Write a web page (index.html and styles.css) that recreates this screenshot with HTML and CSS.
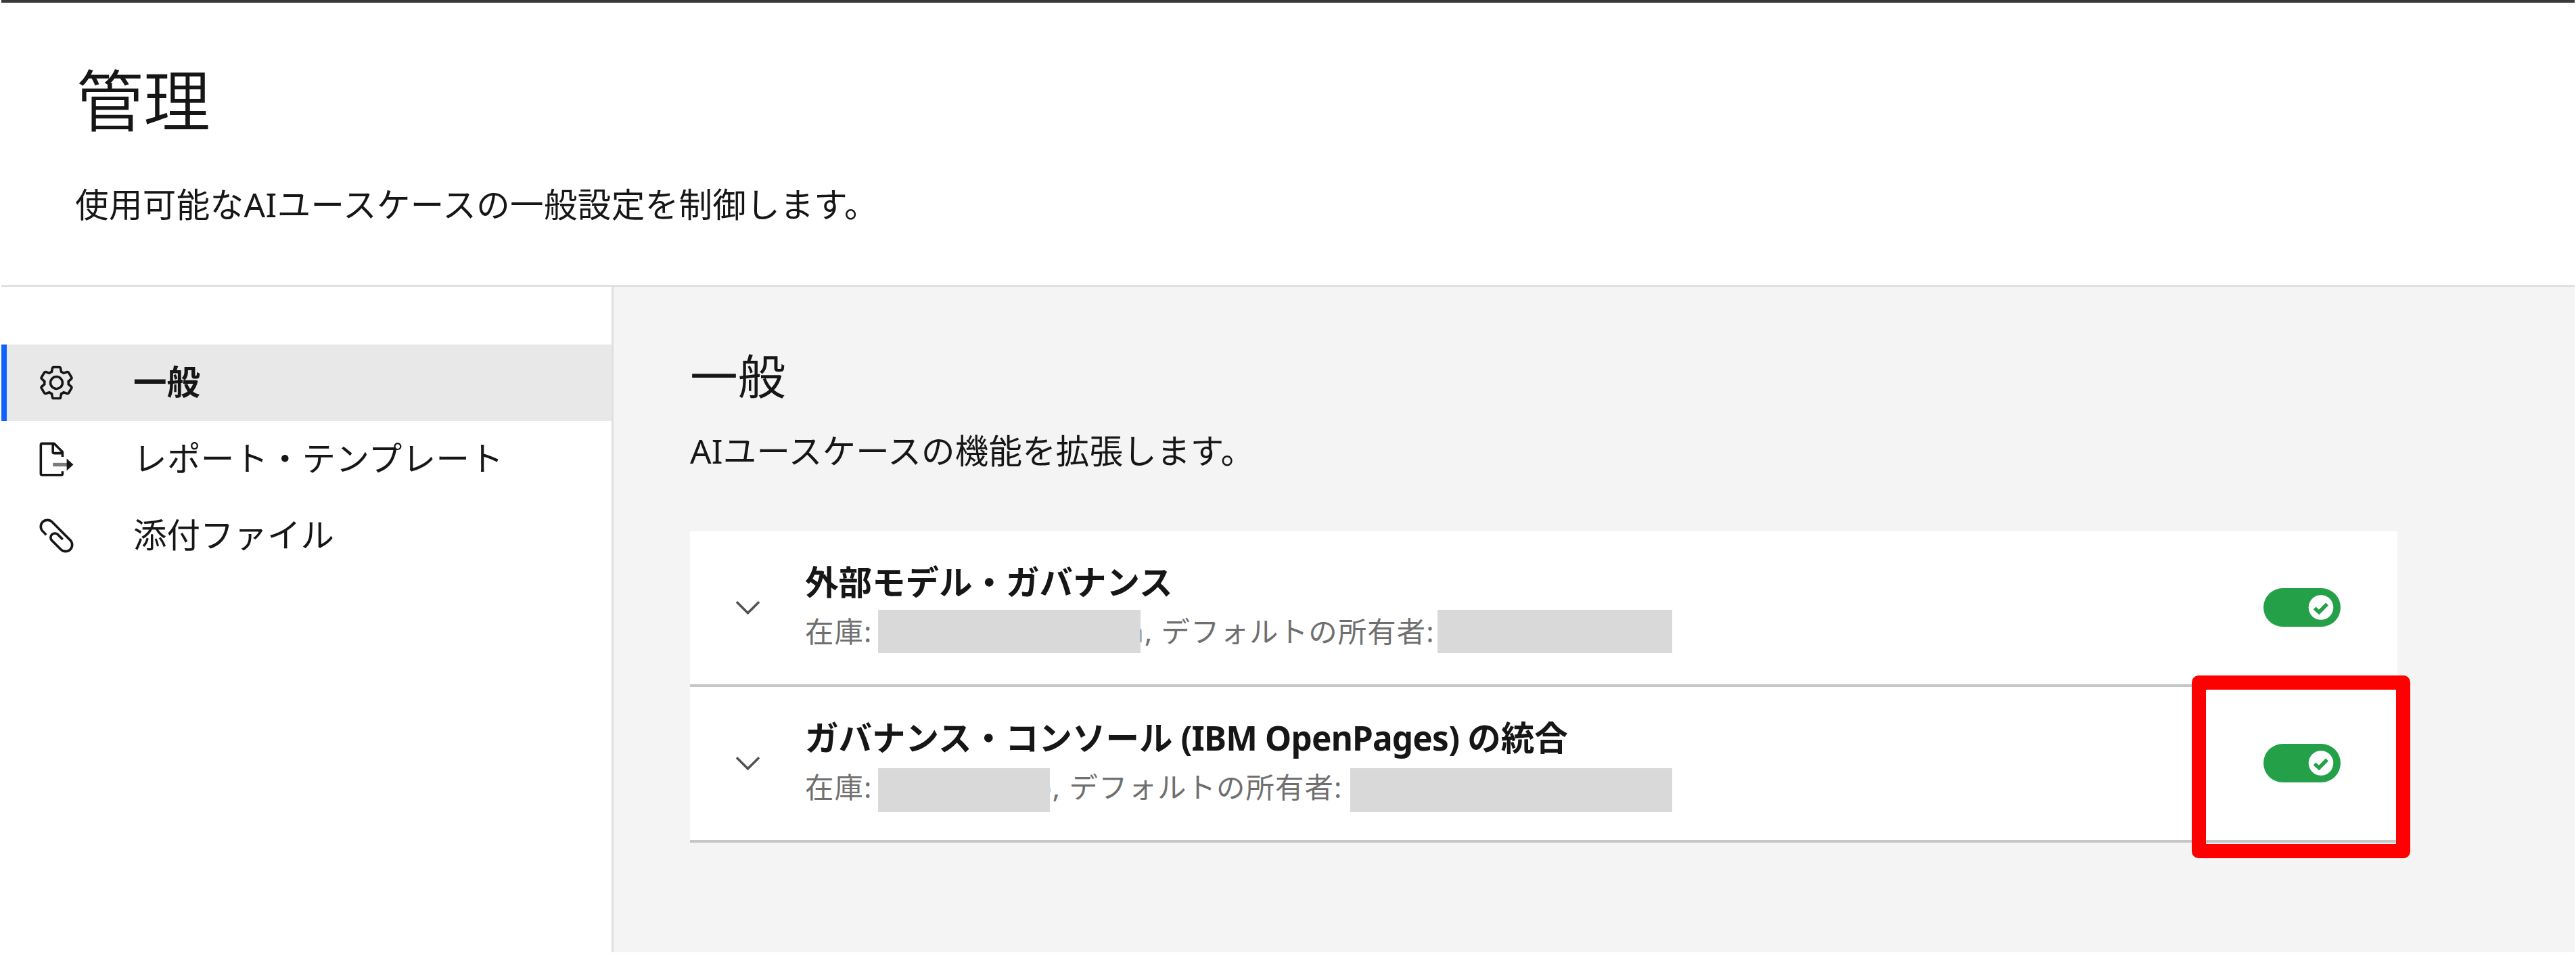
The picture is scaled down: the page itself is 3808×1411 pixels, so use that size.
FILE: index.html
```html
<!DOCTYPE html>
<html lang="ja">
<head>
<meta charset="utf-8">
<title>管理</title>
<link rel="stylesheet" href="styles.css">
</head>
<body>
<div class="page">
  <header class="header">
    <h1 class="header-title">管理</h1>
    <p class="header-desc">使用可能なAIユースケースの一般設定を制御します。</p>
  </header>
  <div class="body">
    <nav class="sidenav">
      <a class="nav-item nav-item-active">
        <svg class="icon" viewBox="0 0 32 32"><path d="M27 16.76c0-.25 0-.5 0-.76s0-.51 0-.77l1.92-1.68A2 2 0 0 0 29.3 11l-2.36-4a2 2 0 0 0-1.73-1 2 2 0 0 0-.64.1l-2.43.82a11.35 11.35 0 0 0-1.31-.75l-.51-2.52a2 2 0 0 0-2-1.61h-4.68a2 2 0 0 0-2 1.61l-.51 2.52a11.48 11.48 0 0 0-1.32.75L7.43 6.06A2 2 0 0 0 6.79 6a2 2 0 0 0-1.73 1L2.7 11a2 2 0 0 0 .41 2.51L5 15.24c0 .25 0 .5 0 .76s0 .51 0 .77l-1.92 1.68A2 2 0 0 0 2.7 21l2.36 4a2 2 0 0 0 1.73 1 2 2 0 0 0 .64-.1l2.43-.82a11.35 11.35 0 0 0 1.31.75l.51 2.52a2 2 0 0 0 2 1.61h4.72a2 2 0 0 0 2-1.61l.51-2.52a11.48 11.48 0 0 0 1.32-.75l2.42.82a2 2 0 0 0 .64.1 2 2 0 0 0 1.73-1l2.28-4a2 2 0 0 0-.41-2.51ZM25.21 24l-3.43-1.16a8.86 8.86 0 0 1-2.71 1.57L18.36 28h-4.72l-.71-3.55a9.36 9.36 0 0 1-2.7-1.57L6.79 24l-2.36-4 2.72-2.4a8.9 8.9 0 0 1 0-3.13L4.43 12l2.36-4 3.43 1.16a8.86 8.86 0 0 1 2.71-1.57L13.64 4h4.72l.71 3.55a9.36 9.36 0 0 1 2.7 1.57L25.21 8l2.36 4-2.72 2.4a8.9 8.9 0 0 1 0 3.13L27.57 20Z"/><path d="M16 22a6 6 0 1 1 6-6 5.94 5.94 0 0 1-6 6Zm0-10a3.91 3.91 0 0 0-4 4 3.91 3.91 0 0 0 4 4 3.91 3.91 0 0 0 4-4 3.91 3.91 0 0 0-4-4Z"/></svg>
        <span class="nav-label">一般</span>
      </a>
      <a class="nav-item">
        <svg class="icon" viewBox="0 0 32 32"><path class="arrow" d="M13 19h12v3H13Z"/><path d="m24.5 15.5 5.5 5-5.5 5Z"/><path d="M22 14v-4a1 1 0 0 0-.29-.71l-7-7A1 1 0 0 0 14 2H4a2 2 0 0 0-2 2v24a2 2 0 0 0 2 2h16a2 2 0 0 0 2-2v-2h-2v2H4V4h8v6a2 2 0 0 0 2 2h6v2Zm-8-4V4.41L19.59 10Z"/></svg>
        <span class="nav-label nav-label-report">レポート・テンプレート</span>
      </a>
      <a class="nav-item">
        <svg class="icon" viewBox="0 0 32 32"><path d="M28.1 18.9 13.1 3.9c-2.5-2.6-6.6-2.6-9.2-.1S1.3 10.5 3.9 13c0 0 .1.1.1.1L6.8 16l1.4-1.4-2.9-2.9C3.6 10 3.6 7.1 5.3 5.4s4.6-1.8 6.3-.1c0 0 0 0 .1.1l14.9 14.9c1.8 1.7 1.8 4.6.1 6.3-1.7 1.8-4.6 1.8-6.3.1 0 0 0 0-.1-.1l-7.4-7.4c-1-1-.9-2.6 0-3.5 1-.9 2.5-.9 3.5 0l4.1 4.1 1.4-1.4c0 0-4.2-4.2-4.2-4.2-1.8-1.7-4.6-1.6-6.3.2-1.6 1.7-1.6 4.4 0 6.2l7.5 7.5c2.5 2.6 6.6 2.6 9.2.1s2.6-6.7 0-9.3Z"/></svg>
        <span class="nav-label">添付ファイル</span>
      </a>
    </nav>
    <main class="main">
      <h2 class="main-title">一般</h2>
      <p class="main-desc">AIユースケースの機能を拡張します。</p>
      <section class="list">
        <div class="row">
          <svg class="chevron" viewBox="0 0 16 16"><path d="M8 11 3 6l.7-.7L8 9.6l4.3-4.3.7.7Z"/></svg>
          <div class="row-text">
            <h3 class="row-title">外部モデル・ガバナンス</h3>
            <div class="row-meta"><span class="stock">在庫:</span><span class="mask mask-a"></span><span class="owner owner-a">a, デフォルトの所有者:</span><span class="mask mask-b"></span></div>
          </div>
          <svg class="toggle" viewBox="0 0 114 57"><rect class="track" width="114" height="57" rx="28.5"/><circle class="thumb" cx="85" cy="28.5" r="18.3"/><path class="check" d="M75.5 29.5 82.2 35.5 94 23.5"/></svg>
        </div>
        <div class="row">
          <svg class="chevron" viewBox="0 0 16 16"><path d="M8 11 3 6l.7-.7L8 9.6l4.3-4.3.7.7Z"/></svg>
          <div class="row-text">
            <h3 class="row-title">ガバナンス・コンソール<span class="latin"> (IBM OpenPages) </span>の統合</h3>
            <div class="row-meta row-meta-low"><span class="stock">在庫:</span><span class="mask mask-c"></span><span class="owner owner-c">o, デフォルトの所有者:</span><span class="mask mask-d"></span></div>
          </div>
          <svg class="toggle" viewBox="0 0 114 57"><rect class="track" width="114" height="57" rx="28.5"/><circle class="thumb" cx="85" cy="28.5" r="18.3"/><path class="check" d="M75.5 29.5 82.2 35.5 94 23.5"/></svg>
          <div class="highlight"></div>
        </div>
      </section>
    </main>
  </div>
</div>
</body>
</html>
```
FILE: styles.css
```css
* { box-sizing: border-box; }
body {
  margin: 0;
  background: #fff;
  color: #161616;
  font-family: "Noto Sans", "Noto Sans CJK JP", sans-serif;
  font-size: 49.5px;
}
h1, h2, h3, p { margin: 0; font-weight: 400; white-space: nowrap; }
.page {
  width: 3808px;
  height: 1411px;
  padding: 0 2px 4px 2px;
  display: flex;
  flex-direction: column;
  overflow: hidden;
}
.header {
  flex: none;
  height: 424px;
  border-top: 4px solid #393939;
  border-bottom: 3px solid #e0e0e0;
  padding: 82px 0 0 109px;
}
.header-title { margin-left: 2px; font-size: 99px; font-weight: 350; line-height: 124px; }
.header-desc { margin-top: 57px; line-height: 70px; letter-spacing: .4px; }
.body { flex: 1; display: flex; min-height: 0; }
.sidenav {
  flex: none;
  width: 905px;
  padding-top: 85px;
  border-right: 3px solid #e0e0e0;
}
.nav-item {
  display: flex;
  align-items: center;
  height: 113px;
  padding-left: 53px;
  gap: 85px;
}
.nav-item-active {
  background: #e8e8e8;
  border-left: 8px solid #0f62fe;
  padding-left: 45px;
  font-weight: 700;
}
.icon { flex: none; width: 57px; height: 57px; fill: #161616; }
.arrow { fill: #7a7a7a; }
.nav-label { line-height: 64px; padding-bottom: 4px; white-space: nowrap; }
.nav-label-report { letter-spacing: .4px; }
.main { flex: 1; background: #f4f4f4; padding: 82px 0 0 113px; }
.main-title { font-size: 70.7px; line-height: 99px; }
.main-desc { margin-top: 29px; line-height: 64px; letter-spacing: .2px; }
.list { width: 2524px; margin-top: 87px; }
.row {
  position: relative;
  display: flex;
  align-items: flex-start;
  height: 230px;
  background: #fff;
  border-bottom: 4px solid #c6c6c6;
}
.chevron { flex: none; width: 57px; height: 57px; margin: 84px 0 0 57px; fill: #525252; }
.row-text { flex: 1; padding: 43px 0 0 56px; }
.row-title { font-size: 49.5px; font-weight: 700; line-height: 64px; }
.latin { letter-spacing: -.8px; }
.row-meta {
  display: flex;
  align-items: flex-start;
  height: 64px;
  margin-top: 9px;
  font-size: 42.4px;
  line-height: 63px;
  letter-spacing: 1.13px;
  color: #6f6f6f;
  white-space: nowrap;
}
.stock { width: 108px; }
.mask { position: relative; z-index: 1; height: 64px; background: #d9d9d9; }
.row-meta-low .mask { height: 65px; margin-top: 4px; }
.mask-a { width: 388px; }
.mask-b { width: 347px; }
.mask-c { width: 254px; }
.mask-d { width: 476px; }
.owner-a { width: 458px; margin-left: -19px; }
.owner-c { width: 467px; margin-left: -23px; }
.toggle { flex: none; width: 114px; height: 57px; margin: 84px 84px 0 0; }
.track { fill: #24a148; }
.thumb { fill: #fff; }
.check { fill: none; stroke: #24a148; stroke-width: 5.5; }
.highlight {
  position: absolute;
  right: -19px;
  top: -17px;
  width: 323px;
  height: 270px;
  background: #f00;
  border-radius: 10px;
  clip-path: path(evenodd, "M0 0H323V270H0ZM21 21V249H302V21Z");
}
```
